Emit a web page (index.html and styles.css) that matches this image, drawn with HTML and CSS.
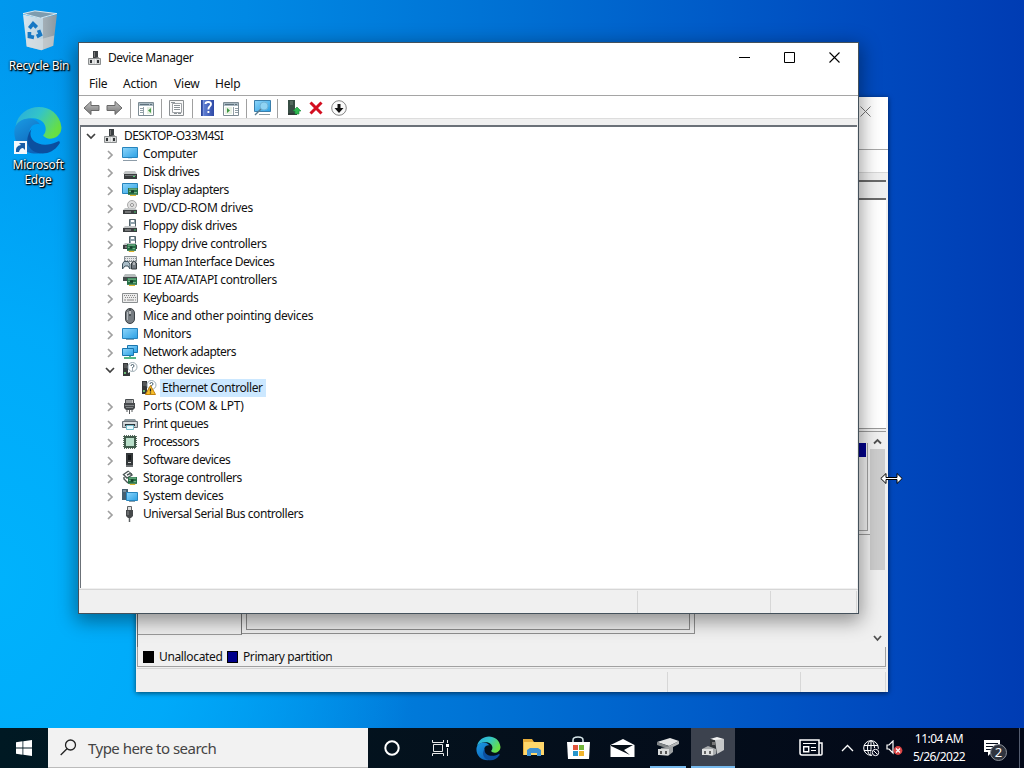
FILE: index.html
```html
<!DOCTYPE html>
<html lang="en">
<head>
<meta charset="utf-8">
<title>Device Manager</title>
<link rel="stylesheet" href="styles.css">
</head>
<body>
<svg class="defs" aria-hidden="true">
<defs>
<linearGradient id="scr" x1="0" y1="0" x2="1" y2="1"><stop offset="0" stop-color="#8ed6fb"/><stop offset="1" stop-color="#2ba0e4"/></linearGradient>
<linearGradient id="edgeTop" x1="0" y1="0" x2="1" y2=".5"><stop offset="0" stop-color="#28a9de"/><stop offset=".5" stop-color="#33c4c9"/><stop offset="1" stop-color="#68e044"/></linearGradient>
<linearGradient id="edgeLeft" x1="0" y1="0" x2=".6" y2="1"><stop offset="0" stop-color="#1a9be4"/><stop offset="1" stop-color="#0d62b8"/></linearGradient>
<linearGradient id="arrow" x1="0" y1="0" x2="0" y2="1"><stop offset="0" stop-color="#c4c4c4"/><stop offset="1" stop-color="#747474"/></linearGradient>
<linearGradient id="bin" x1="0" y1="0" x2="1" y2="0"><stop offset="0" stop-color="#d6e5ee"/><stop offset=".58" stop-color="#bdd3e0"/><stop offset=".6" stop-color="#a3afb7"/><stop offset="1" stop-color="#8b99a1"/></linearGradient>
<linearGradient id="help" x1="0" y1="0" x2="1" y2="0"><stop offset="0" stop-color="#263f94"/><stop offset=".25" stop-color="#5c7bd0"/><stop offset="1" stop-color="#2e49a5"/></linearGradient>
</defs>
<symbol id="i-root" viewBox="0 0 16 16"><path d="M7 1h5v7H7z" fill="#3b3f42"/><path d="M8 2h1v5H8z" fill="#777"/><path d="M9 8l4-1v2h-4z" fill="#999"/><path d="M2.500 8.500h12v6h-12z" fill="#d2d4d4" stroke="#8c8f90"/><path d="M4 10h2v3H4zM11 10h2v3h-2z" fill="#303335"/><path d="M7 9v5M9.500 9v5" stroke="#eee"/></symbol>
<symbol id="i-computer" viewBox="0 0 16 16"><path d="M.5 1.500h15v10H.5z" fill="url(#scr)" stroke="#2784bd"/><path d="M6 12h4v1H6z" fill="#cfe3ef"/><path d="M1 14.500h14" stroke="#8d9ca8"/></symbol>
<symbol id="i-disk" viewBox="0 0 16 16"><path d="M3 7h10l2 3H1z" fill="#c2c5c6"/><path d="M2 10h13v5H2z" fill="#393c3e"/><path d="M3 11.500h11" stroke="#727779"/><path d="M11 12h2v1h-2z" fill="#4fd572"/></symbol>
<symbol id="i-card" viewBox="0 0 10 7" preserveAspectRatio="none"><path d="M0 0h10v6H0z" fill="#267047"/><path d="M1 1h8M1 3h3M6 4h3" stroke="#75b58b"/><path d="M3 2h3v2H3z" fill="#153d2a"/><path d="M2 6h6v1H2z" fill="#ddb52d"/></symbol>
<symbol id="i-display" viewBox="0 0 16 16"><path d="M.5 1.500h15v10H.5z" fill="url(#scr)" stroke="#2784bd"/><use href="#i-card" x="6" y="6" width="10" height="8"/></symbol>
<symbol id="i-dvd" viewBox="0 0 16 16"><circle cx="10" cy="5" r="4.500" fill="#dfdfdf" stroke="#aaa"/><circle cx="10" cy="5" r="1.500" fill="#fff" stroke="#8f8f8f"/><path d="M3 8h10l2 2H1z" fill="#c2c5c6"/><path d="M1 10h14v4H1z" fill="#3b3e40"/><path d="M3 12h6" stroke="#aaa"/><path d="M12 12h2" stroke="#49c86b"/></symbol>
<symbol id="i-floppy" viewBox="0 0 16 16"><path d="M7.500 1.500h6v7h-6z" fill="#8fa2ab" stroke="#53636b"/><path d="M9 2h3v2H9zM9 6h4v2H9z" fill="#fff"/><path d="M3 8h10l2 2H1z" fill="#c2c5c6"/><path d="M1 10h14v4H1z" fill="#3b3e40"/><path d="M3 12h6" stroke="#aaa"/><path d="M12 12h2" stroke="#49c86b"/></symbol>
<symbol id="i-floppyc" viewBox="0 0 16 16"><use href="#i-floppy" y="-1" width="16" height="16"/><use href="#i-card" x="5" y="8" width="9" height="8"/></symbol>
<symbol id="i-hid" viewBox="0 0 16 16"><path d="M2.500 2.500h12v5h-12z" fill="#e6e7e8" stroke="#878e92"/><path d="M3 4.500h11M3 6.500h11" stroke="#929a9e" stroke-dasharray="1 1"/><path d="M.5 15v-5L2 7.500h4l2 2.500v5l-2-3H3z" fill="#a9bcc7" stroke="#40545f"/><path d="M9.500 15V9q2.500-3 5 0v6z" fill="#747c82" stroke="#343b3f"/><path d="M12 8v3" stroke="#eee"/></symbol>
<symbol id="i-ide" viewBox="0 0 16 16"><path d="M3 2h10l2 3H1z" fill="#b7bdbd"/><path d="M1 5h14v4H1z" fill="#454b4c"/><use href="#i-card" x="5" y="6" width="10" height="8"/></symbol>
<symbol id="i-keyboard" viewBox="0 0 16 16"><path d="M.5 3.500h15v9H.5z" fill="#ececec" stroke="#8b8f91"/><path d="M2 5.500h12M3 7.500h11" stroke="#888" stroke-dasharray="1 1"/><path d="M2 10h2m1 0h7m1 0h1" stroke="#888"/></symbol>
<symbol id="i-mouse" viewBox="0 0 16 16"><rect x="3.500" y=".5" width="9" height="15" rx="4.500" fill="#777d82" stroke="#3c4145"/><path d="M5.500 4v8" stroke="#b4b9bd"/><path d="M8 1v7" stroke="#252a2d"/><path d="M8 3v3" stroke="#ddd" stroke-width="1.500"/></symbol>
<symbol id="i-monitor" viewBox="0 0 16 16"><path d="M.5 2.500h15v10H.5z" fill="url(#scr)" stroke="#2582bc"/><path d="M4 13h8v1H4z" fill="#809fb1"/></symbol>
<symbol id="i-network" viewBox="0 0 16 16"><path d="M5.500 1.500h10v7h-10z" fill="url(#scr)" stroke="#1975ae"/><path d="M.5 4.500h11v7H.5z" fill="url(#scr)" stroke="#1975ae"/><path d="M2 14h12M8 12v3" stroke="#55b785" stroke-width="2"/></symbol>
<symbol id="i-other" viewBox="0 0 16 16"><path d="M1 1h5v13H1z" fill="#35383a"/><path d="M2 3h3M2 5h3" stroke="#777"/><path d="M2 10h2v2H2z" fill="#6ab973"/><path d="M6 11l2-1v4H6z" fill="#363d3c"/><circle cx="10.500" cy="5" r="4.500" fill="#fff" stroke="#9dacb4"/><path d="M9 4q0-1.500 1.500-1.500T12 4q0 1-1.500 1.500v1m0 1v1" fill="none" stroke="#445b69"/></symbol>
<symbol id="i-ethernet" viewBox="0 0 16 16"><use href="#i-other" width="16" height="16"/><path d="M9.500 5.500l5 9h-10z" fill="#f9bf28" stroke="#c28210"/><path d="M9.500 8.500v3m0 1v1" stroke="#222" stroke-width="1.300"/></symbol>
<symbol id="i-port" viewBox="0 0 16 16"><path d="M3.500 1.500h8v4h-8z" fill="#c9cacb" stroke="#4c5053"/><path d="M5 2v3m2-3v3m2-3v3" stroke="#6b6f72"/><path d="M2 5h11v5l-2 2H4l-2-2z" fill="#474a4d"/><path d="M3 7.500h9M4 9.500h7" stroke="#828688"/><path d="M7.500 12v4M5 11v3m5-3v3" stroke="#55585a"/></symbol>
<symbol id="i-print" viewBox="0 0 16 16"><path d="M3 3h10l2 3H1z" fill="#8d999e"/><path d="M.5 5.500h15v6H.5z" fill="#c3c9cc" stroke="#687178"/><path d="M2 7h12" stroke="#eef1f2"/><path d="M3 8h10v2H3z" fill="#28333a"/><path d="M4.500 9.500h7v4h-7z" fill="#eafaff" stroke="#74bdcc"/></symbol>
<symbol id="i-cpu" viewBox="0 0 16 16"><path d="M1 2.500h14M1 4.500h14M1 6.500h14M1 8.500h14M1 10.500h14M1 12.500h14M2.500 1v14M4.500 1v14M6.500 1v14M8.500 1v14M10.500 1v14M12.500 1v14" stroke="#596d60"/><path d="M2 2h12v12H2z" fill="#405b4b"/><path d="M4 4h8v8H4z" fill="#b9dfca"/></symbol>
<symbol id="i-soft" viewBox="0 0 16 16"><path d="M4 1h7v14H4z" fill="#34383a"/><path d="M6 3h3v5H6z" fill="#17191b"/><path d="M6 10h3v1H6z" fill="#ccc"/><path d="M4 13h7v2H4z" fill="#6a6e70"/></symbol>
<symbol id="i-storage" viewBox="0 0 16 16"><path d="M6.500 1L1.500 4.500 5 8l5-3-2-1.500-3 1.500M2 7v2l4 4" fill="none" stroke="#4b5656" stroke-width="1.400"/><path d="M6 1l4 3" stroke="#4b5656"/><use href="#i-card" x="6" y="7" width="9" height="8"/></symbol>
<symbol id="i-system" viewBox="0 0 16 16"><path d="M0 1h6v4H0zM0 5h4v7H0z" fill="#465f70"/><path d="M1 3h3" stroke="#a8bdca"/><path d="M4.500 4.500h11v8h-11z" fill="url(#scr)" stroke="#2784bd"/><path d="M7 13h6v1H7z" fill="#899fac"/></symbol>
<symbol id="i-usb" viewBox="0 0 16 16"><path d="M5.500.500h4v4h-4z" fill="#ddd" stroke="#606365"/><path d="M4 4h7v6l-2 2H6l-2-2z" fill="#46494b"/><path d="M6 5v4" stroke="#8b8f91"/><path d="M7.500 12v4" stroke="#5d6163" stroke-width="1.500"/></symbol>
<symbol id="i-edge" viewBox="0 0 48 48"><path d="M2 20C6-5 44-6 47 21c0 11-14 14-18 8 6-7 1-17-10-17C10 12 4 16 2 20z" fill="url(#edgeTop)"/><path d="M1 23c2-11 18-15 25-5-8-2-12 5-10 13 2 8 9 13 15 14C14 51-1 39 1 23z" fill="url(#edgeLeft)"/><path d="M18 22c-6 11 8 21 25 13 2-1 3 0 2 2C34 54 10 46 14 30q1-5 4-8z" fill="#0b4f9f"/></symbol>
</svg>

<main class="desktop">
  <div class="shortcut bin">
    <svg width="41" height="44" viewBox="0 0 44 48"><path d="M4 6l19 4 18-4-4 34-13 5-16-4z" fill="url(#bin)"/><path d="M4 5L17 2l24 3-18 5z" fill="#7d9caf" stroke="#e1edf3"/><path d="M7 30l16 3 15-4-1 11-13 5-16-4z" fill="#dadcdd" opacity=".55"/><g fill="none" stroke="#1778c4" stroke-width="4"><path d="M11 21l4-5 4 4M21 23l2 5-4 2M16 31l-5-1v-5"/></g></svg>
    <span>Recycle Bin</span>
  </div>
  <div class="shortcut edge">
    <svg width="50" height="50" viewBox="0 0 50 50"><use href="#i-edge" x="0" y="0" width="50" height="49"/><path d="M1 35h13v13H1z" fill="#f4f8fb"/><path d="M3 46q-1-6 5-7l-2-2h6v7l-2-2q-3 0-4 4z" fill="#185ca5"/></svg>
    <span>Microsoft<br>Edge</span>
  </div>

  <section class="window disk-window">
    <div class="disk-title"><svg width="11" height="11" viewBox="0 0 11 11"><path d="M.5.500l10 10m0-10l-10 10" stroke="#777"/></svg></div>
    <div class="disk-tools"></div>
    <div class="disk-gap"></div>
    <div class="disk-head"></div>
    <div class="disk-list"></div>
    <div class="disk-graph">
      <div class="tracks">
        <div class="track-one"><div class="volume"><div class="volume-bar"></div></div></div>
        <div class="track-two"><div class="disk-label"></div><div class="track-outer"><div class="track-inner"></div></div></div>
      </div>
      <div class="scroll">
        <svg width="15" height="17" viewBox="0 0 15 17"><path d="M4 11.500L7.500 8l3.500 3.500" fill="none" stroke="#505050" stroke-width="1.800"/></svg>
        <div class="thumb"></div>
        <svg width="15" height="17" viewBox="0 0 15 17"><path d="M4 6l3.500 4L11 6" fill="none" stroke="#505050" stroke-width="1.800"/></svg>
      </div>
    </div>
    <div class="legend"><i class="swatch black"></i><span class="leg1">Unallocated</span><i class="swatch navy"></i><span class="leg2">Primary partition</span></div>
    <div class="status disk-status"><i></i><i></i><i></i></div>
  </section>

  <section class="window device-window">
    <header class="titlebar">
      <svg class="icon" width="16" height="16"><use href="#i-root"/></svg><span>Device Manager</span>
      <div class="controls">
        <svg width="11" height="11" viewBox="0 0 11 11"><path d="M0 5.500h11" stroke="#000"/></svg>
        <svg width="11" height="11" viewBox="0 0 11 11"><path d="M.5.500h10v10H.5z" fill="none" stroke="#000"/></svg>
        <svg width="11" height="11" viewBox="0 0 11 11"><path d="M.5.500l10 10m0-10l-10 10" stroke="#000" stroke-width="1.100"/></svg>
      </div>
    </header>
    <nav class="menu"><span class="m1">File</span><span class="m2">Action</span><span class="m3">View</span><span class="m4">Help</span></nav>
    <div class="toolbar">
      <svg width="270" height="22" viewBox="0 0 270 22">
        <path d="M4 12l7-6.500v4h8v5h-8v4zM42 12l-7-6.500v4h-8v5h8v4z" fill="url(#arrow)" stroke="#686868"/>
        <path d="M50.500 3v19M81.500 3v19M112.500 3v19M166.500 3v19M197.500 3v19" stroke="#a0a0a0"/>
        <g id="panel"><path d="M58.500 6.500h15v13h-15z" fill="#fff" stroke="#7d8b93"/><path d="M59 8.500h14" stroke="#a9b9c2" stroke-width="3"/><path d="M60 8.500h9m1 0h2" stroke="#5f717c"/></g>
        <path d="M63.500 11v8M60 12.500h3m-3 2h3m-3 2h3" stroke="#93a0a8"/><path d="M67 11h5v7h-5z" fill="#e8f1e4"/><path d="M71 12v5l-3-2.500z" fill="#4c9f4c"/>
        <path d="M89.500 4.500h14v15h-14z" fill="#f8f8f8" stroke="#8b8f91"/><path d="M92.500 7.500h9v9h-9z" fill="#fff" stroke="#9fa3a6"/><path d="M91 6.500h4M94 9.500h6m-6 2h6m-6 2h6M94 17.500h3m1 0h3" stroke="#8b9297"/>
        <path d="M121 4h13v16h-13z" fill="url(#help)"/><path d="M123.500 4v16" stroke="#7692dc"/><path d="M125.500 8q0-2 2.700-2t2.800 2q0 1.500-1.400 2.500-1.200 1-1.200 3m0 1.500v2" fill="none" stroke="#fff" stroke-width="1.900"/>
        <use href="#panel" x="85"/><path d="M153.500 11v8M155 12.500h3m-3 2h3m-3 2h3" stroke="#93a0a8"/><path d="M145 11h7v7h-7z" fill="#e8f1e4"/><path d="M147 12v5l3-2.500z" fill="#3c963f"/>
        <path d="M174.500 4.500h16v11h-16z" fill="url(#scr)" stroke="#3a7fac"/><circle cx="184" cy="10" r="4" fill="#8fd3f3" stroke="#70b4d8"/><path d="M181 13l-6 6" stroke="#5b7c8e" stroke-width="1.500"/><path d="M179 18.500h11" stroke="#8b9ba4"/>
        <path d="M208 4h7v13h-7z" fill="#374e44"/><path d="M210 6h3m-3 2h3" stroke="#708478"/><path d="M208 17h9v2h-9z" fill="#303c38"/><path d="M213 15l4-4 4 4h-2v3h-4v-3z" fill="#2eb850" stroke="#188e39" stroke-width=".6"/>
        <path d="M230.500 6.500l11 11m0-11l-11 11" stroke="#d30e20" stroke-width="3"/>
        <circle cx="259" cy="12" r="7.300" fill="#fafafa" stroke="#858585"/><path d="M257.500 8h3v4h3l-4.500 5-4.500-5h3z" fill="#111"/>
      </svg>
    </div>
    <div class="tool-gap"></div>
    <div class="tree">
      <div class="row root"><svg class="chev open" viewBox="0 0 10 10"><path d="M1 3l4 4 4-4"/></svg><svg class="icon"><use href="#i-root"/></svg><span>DESKTOP-O33M4SI</span></div>
      <div class="row"><svg class="chev" viewBox="0 0 10 10"><path d="M3 1l4 4-4 4"/></svg><svg class="icon"><use href="#i-computer"/></svg><span>Computer</span></div>
      <div class="row"><svg class="chev" viewBox="0 0 10 10"><path d="M3 1l4 4-4 4"/></svg><svg class="icon"><use href="#i-disk"/></svg><span class="snug">Disk drives</span></div>
      <div class="row"><svg class="chev" viewBox="0 0 10 10"><path d="M3 1l4 4-4 4"/></svg><svg class="icon"><use href="#i-display"/></svg><span class="tight">Display adapters</span></div>
      <div class="row"><svg class="chev" viewBox="0 0 10 10"><path d="M3 1l4 4-4 4"/></svg><svg class="icon"><use href="#i-dvd"/></svg><span class="loose">DVD/CD-ROM drives</span></div>
      <div class="row"><svg class="chev" viewBox="0 0 10 10"><path d="M3 1l4 4-4 4"/></svg><svg class="icon"><use href="#i-floppy"/></svg><span>Floppy disk drives</span></div>
      <div class="row"><svg class="chev" viewBox="0 0 10 10"><path d="M3 1l4 4-4 4"/></svg><svg class="icon"><use href="#i-floppyc"/></svg><span>Floppy drive controllers</span></div>
      <div class="row"><svg class="chev" viewBox="0 0 10 10"><path d="M3 1l4 4-4 4"/></svg><svg class="icon"><use href="#i-hid"/></svg><span class="snug">Human Interface Devices</span></div>
      <div class="row"><svg class="chev" viewBox="0 0 10 10"><path d="M3 1l4 4-4 4"/></svg><svg class="icon"><use href="#i-ide"/></svg><span>IDE ATA/ATAPI controllers</span></div>
      <div class="row"><svg class="chev" viewBox="0 0 10 10"><path d="M3 1l4 4-4 4"/></svg><svg class="icon"><use href="#i-keyboard"/></svg><span class="snug">Keyboards</span></div>
      <div class="row"><svg class="chev" viewBox="0 0 10 10"><path d="M3 1l4 4-4 4"/></svg><svg class="icon"><use href="#i-mouse"/></svg><span class="mice">Mice and other pointing devices</span></div>
      <div class="row"><svg class="chev" viewBox="0 0 10 10"><path d="M3 1l4 4-4 4"/></svg><svg class="icon"><use href="#i-monitor"/></svg><span>Monitors</span></div>
      <div class="row"><svg class="chev" viewBox="0 0 10 10"><path d="M3 1l4 4-4 4"/></svg><svg class="icon"><use href="#i-network"/></svg><span class="tight">Network adapters</span></div>
      <div class="row"><svg class="chev open" viewBox="0 0 10 10"><path d="M1 3l4 4 4-4"/></svg><svg class="icon"><use href="#i-other"/></svg><span class="snug">Other devices</span></div>
      <div class="row child"><svg class="icon"><use href="#i-ethernet"/></svg><span class="selected">Ethernet Controller</span></div>
      <div class="row"><svg class="chev" viewBox="0 0 10 10"><path d="M3 1l4 4-4 4"/></svg><svg class="icon"><use href="#i-port"/></svg><span class="ports">Ports (COM &amp; LPT)</span></div>
      <div class="row"><svg class="chev" viewBox="0 0 10 10"><path d="M3 1l4 4-4 4"/></svg><svg class="icon"><use href="#i-print"/></svg><span class="tight">Print queues</span></div>
      <div class="row"><svg class="chev" viewBox="0 0 10 10"><path d="M3 1l4 4-4 4"/></svg><svg class="icon"><use href="#i-cpu"/></svg><span class="tight">Processors</span></div>
      <div class="row"><svg class="chev" viewBox="0 0 10 10"><path d="M3 1l4 4-4 4"/></svg><svg class="icon"><use href="#i-soft"/></svg><span class="snug">Software devices</span></div>
      <div class="row"><svg class="chev" viewBox="0 0 10 10"><path d="M3 1l4 4-4 4"/></svg><svg class="icon"><use href="#i-storage"/></svg><span class="snug">Storage controllers</span></div>
      <div class="row"><svg class="chev" viewBox="0 0 10 10"><path d="M3 1l4 4-4 4"/></svg><svg class="icon"><use href="#i-system"/></svg><span>System devices</span></div>
      <div class="row"><svg class="chev" viewBox="0 0 10 10"><path d="M3 1l4 4-4 4"/></svg><svg class="icon"><use href="#i-usb"/></svg><span class="snug">Universal Serial Bus controllers</span></div>
    </div>
    <div class="status device-status"><i></i><i></i><i></i></div>
  </section>

  <svg class="cursor" width="23" height="13" viewBox="0 0 23 13"><path d="M.8 6.500L6 1.500v4h11v-4l5.200 5-5.200 5v-4H6v4z" fill="#fff" stroke="#000"/></svg>
</main>

<footer class="taskbar">
  <div class="start"><svg width="16" height="16" viewBox="0 0 16 16"><path d="M0 2.200l6.500-.9v6.300H0zM7.300 1.200L16 0v7.600H7.300zM0 8.400h6.500v6.300L0 13.800zM7.300 8.400H16V16l-8.700-1.200z" fill="#fff"/></svg></div>
  <div class="search"><svg width="17" height="17" viewBox="0 0 17 17"><circle cx="10.500" cy="6" r="5" fill="none" stroke="#222" stroke-width="1.300"/><path d="M7 9.700L.7 16" stroke="#222" stroke-width="1.300"/></svg><span>Type here to search</span></div>
  <div class="app cortana"><svg width="16" height="16" viewBox="0 0 16 16"><circle cx="8" cy="8" r="6.700" fill="none" stroke="#fff" stroke-width="2"/></svg></div>
  <div class="app"><svg width="17" height="16" viewBox="0 0 17 16"><path d="M.5 0v2.500h11V0M.5 16v-2.500h11V16M1.500 4.500h9v7h-9zM15.500 0v3m0 5v8" fill="none" stroke="#e8e8e8"/><path d="M14 4h3v3h-3z" fill="#fff"/></svg></div>
  <div class="app edge-app"><svg width="25" height="25"><use href="#i-edge"/></svg></div>
  <div class="app"><svg width="23" height="20" viewBox="0 0 23 20"><path d="M1 1h9l2 3h10v13H1z" fill="#e7ad3b"/><path d="M2 4h20v13H2z" fill="#ffd76b"/><path d="M5 18v-6l3-2h8l3 2v6h-4v-3H9v3z" fill="#3e91d3"/></svg></div>
  <div class="app"><svg width="24" height="24" viewBox="0 0 24 24"><path d="M7 6V4q0-3 5-3t5 3v2" fill="none" stroke="#d6e5e8" stroke-width="1.500"/><path d="M1 6h23l-1 17H2z" fill="#fff"/><path d="M7 9h5v5H7z" fill="#e3563d"/><path d="M13 9h5v5h-5z" fill="#74b63b"/><path d="M7 15h5v5H7z" fill="#2796cc"/><path d="M13 15h5v5h-5z" fill="#f0b42c"/></svg></div>
  <div class="app"><svg width="25" height="20" viewBox="0 0 25 20"><path d="M.5 7L13 1l11.500 6v12H.5z" fill="#fff"/><path d="M1 7h22l-9 5 6 5L1 8z" fill="#071019"/></svg></div>
  <div class="app running"><svg width="25" height="22" viewBox="0 0 25 22"><path d="M1 6l13-4 9 3-10 5z" fill="#e4e5e5"/><path d="M1 6l12 4v3L1 9z" fill="#818587"/><path d="M13 10l10-5v3l-10 5z" fill="#b4b6b7"/><path d="M5 12l12-2v6l-5 4-9-1z" fill="#9da0a2"/><path d="M2 13h11v6H2z" fill="#d8dada"/><path d="M4 15h2v3H4zM9 15h2v3H9z" fill="#555"/></svg></div>
  <div class="app running active"><svg width="25" height="22" viewBox="0 0 25 22"><path d="M9 3l7-2 7 2-4 3z" fill="#f2f2f2"/><path d="M9 3l8 2v12l-8-5z" fill="#303437"/><path d="M11 6h3v3h-3z" fill="#777"/><path d="M14 4l9-1v11l-7 4z" fill="#c5c7c8"/><path d="M1 13l6-3 8 3v5l-4 2-10-2z" fill="#a8abad"/><path d="M1 13h11v6H1z" fill="#dedfdf"/><path d="M3 15h2v3H3zM8 15h2v3H8z" fill="#666"/></svg></div>
  <div class="tray">
    <svg class="news" width="25" height="18" viewBox="0 0 25 18"><path d="M1 1h19v15H3q-2 0-2-2zM20 4h3v11q0 1-1 1h-3" fill="none" stroke="#fff" stroke-width="1.500"/><path d="M4 4.500h13M12 8.500h5m-5 3h5" stroke="#fff"/><path d="M4.700 7.700h5v5h-5z" fill="none" stroke="#fff" stroke-width="1.400"/></svg>
    <svg class="up" width="13" height="8" viewBox="0 0 13 8"><path d="M1 7l5.500-5.500L12 7" fill="none" stroke="#fff" stroke-width="1.300"/></svg>
    <svg class="globe" width="17" height="17" viewBox="0 0 17 17"><g fill="none" stroke="#fff"><circle cx="8" cy="8" r="7.300"/><ellipse cx="8" cy="8" rx="3.500" ry="7.300"/><path d="M1 5.500h14M1 10.500h14M8 1v14"/></g><circle cx="12.500" cy="12.500" r="4.500" fill="#05091d"/><circle cx="12.500" cy="12.500" r="3.200" fill="#05091d" stroke="#fff"/><path d="M10.500 10.500l4 4" stroke="#fff"/></svg>
    <svg class="sound" width="17" height="16" viewBox="0 0 17 16"><path d="M1 5h2l4-4v12L3 9H1z" fill="none" stroke="#fff" stroke-width="1.200"/><circle cx="12" cy="10.500" r="4.400" fill="#d94343"/><path d="M10 8.500l4 4m0-4l-4 4" stroke="#fff" stroke-width="1.200"/></svg>
    <div class="clock"><span class="time">11:04 AM</span><span class="date">5/26/2022</span></div>
    <div class="notice"><svg width="18" height="18" viewBox="0 0 18 18"><path d="M1 1h16v12H9l-4 4v-4H1z" fill="#fff"/><path d="M3 4.500h12m-12 3h12m-12 3h8" stroke="#071020"/></svg><b>2</b></div>
  </div>
</footer>
</body>
</html>
```
FILE: styles.css
```css
* { box-sizing: border-box; }
html, body { width: 1024px; height: 768px; margin: 0; overflow: hidden; }
body { display: flex; flex-direction: column; font: 12px/18px "Noto Sans", sans-serif; letter-spacing: -.35px; color: #111; }
svg { display: block; flex: none; }
i, b { font-style: normal; }
.defs { position: absolute; width: 0; height: 0; }
.desktop { position: relative; height: 728px; background: radial-gradient(ellipse 420px 560px at 0 580px, #00b2fc 0%, rgba(0, 174, 252, .85) 45%, rgba(0, 160, 245, 0) 100%), linear-gradient(90deg, #0098ee 0%, #0089e4 24%, #0070d3 50%, #0057c6 73%, #0048bd 87%, #003cb3 100%); }

.shortcut { position: absolute; left: 0; width: 76px; display: flex; flex-direction: column; align-items: center; text-align: center; color: #fff; line-height: 15px; letter-spacing: -.25px; text-shadow: 1px 1px 2px #000, 0 0 2px #000, 1px 1px 1px #000; }
.bin { top: 9px; left: 1px; }
.bin span { margin-top: 5px; }
.edge { top: 106px; }
.edge span { margin-top: 1px; }

.window { position: absolute; display: flex; flex-direction: column; background: #f0f0f0; }
.window > * { flex-shrink: 0; }
.disk-window { left: 136px; top: 97px; width: 752px; height: 595px; padding: 0 2px 0 1px; box-shadow: 0 1px 5px rgba(0, 0, 0, .6); }
.disk-title { height: 53px; margin: 0 -2px 0 -1px; padding: 9px 17px; background: #fff; border-bottom: 1px solid #a8a8a8; display: flex; justify-content: flex-end; }
.disk-tools { height: 23px; margin: 0 -2px 0 -1px; background: #fff; border-bottom: 1px solid #d8d8d8; }
.disk-gap { height: 7px; }
.disk-head { height: 20px; background: #f0f0f0; border: solid #696969; border-width: 2px 0 2px; }
.disk-list { height: 228px; background: #fff; }
.disk-graph { height: 219px; display: flex; border-left: 1px solid #696969; border-top: 4px double #999; }
.tracks { width: 732px; display: flex; flex-direction: column; }
.track-one { height: 103px; border-bottom: 1px solid #999; padding: 11px 2px 3px 106px; display: flex; }
.volume { width: 100%; border: solid #a0a0a0; border-width: 0 1px 1px 1px; padding-right: 1px; }
.volume-bar { height: 14px; background: #00008b; }
.track-two { height: 100px; display: flex; }
.disk-label { width: 104px; height: 100px; border-right: 1px solid #777; border-bottom: 1px solid #999; background: #eee; }
.track-outer { width: 453px; height: 99px; padding: 2px 4px 3px; border: solid #909090; border-width: 0 1px 1px 0; }
.track-inner { height: 93px; border: 1px solid #8c8c8c; background: #ebebeb; }
.scroll { width: 15px; background: #f0f0f0; display: flex; flex-direction: column; }
.thumb { height: 121px; background: #cdcdcd; margin-bottom: 60px; }
.legend { height: 20px; border: solid #a0a0a0; border-width: 0 1px 1px; padding-left: 5px; display: flex; align-items: center; }
.swatch { width: 11px; height: 12px; border: 1px solid #000; }
.black { background: #000; }
.navy { background: #00008b; }
.leg1 { width: 68px; margin-left: 5px; letter-spacing: -.35px; }
.leg2 { margin-left: 5px; letter-spacing: -.4px; }
.status { display: flex; border-top: 1px solid #d6d6d6; }
.status i { border-right: 1px solid #d7d7d7; }
.disk-status { height: 24px; margin-top: 1px; padding-top: 3px; }
.disk-status i:nth-child(1) { width: 531px; }
.disk-status i:nth-child(2) { width: 133px; }
.disk-status i:nth-child(3) { width: 85px; }

.device-window { left: 78px; top: 42px; width: 781px; height: 572px; border: 1px solid #44515b; box-shadow: 0 5px 18px 2px rgba(0, 0, 0, .4); }
.titlebar { height: 30px; padding: 0 18px 0 7px; background: #fff; display: flex; align-items: center; }
.titlebar span { margin-left: 6px; letter-spacing: -.4px; }
.controls { display: flex; gap: 34px; margin-left: auto; margin-bottom: 2px; }
.menu { height: 23px; padding-left: 10px; background: #fff; display: flex; align-items: center; border-bottom: 1px solid #a5a5a5; letter-spacing: -.2px; }
.m1 { width: 34px; } .m2 { width: 51px; } .m3 { width: 41px; }
.toolbar { height: 23px; background: #fff; border-bottom: 1px solid #ddd; }
.toolbar svg { margin-left: 1px; }
.tool-gap { height: 6px; background: #f0f0f0; }
.tree { height: 463px; margin: 0 1px; border: solid #6b7178; border-width: 2px 0 0 1px; background: #fff; }
.row { height: 18px; display: flex; align-items: center; padding-left: 24px; }
.root { padding-left: 5px; }
.child { padding-left: 60px; }
.chev { width: 10px; height: 10px; margin-right: 7px; margin-top: 2px; fill: none; stroke: #a0a0a0; stroke-width: 1.700; }
.root .chev { margin-right: 6px; }
.chev.open { stroke: #404040; margin-top: 0; }
.icon { width: 16px; height: 16px; flex: none; }
.row span { margin-left: 5px; white-space: nowrap; }
.row .selected { height: 18px; margin-left: 3px; padding: 0 3px 0 2px; background: #cce8ff; letter-spacing: -.4px; }
.root span { margin-left: 6px; letter-spacing: -.57px; }
.snug { letter-spacing: -.45px; }
.tight { letter-spacing: -.53px; }
.loose { letter-spacing: -.24px; }
.ports { letter-spacing: -.11px; }
.mice { letter-spacing: -.32px; }
.device-status { height: 24px; margin-top: 1px; padding-top: 1px; }
.device-status i:nth-child(1) { width: 559px; }
.device-status i:nth-child(2) { width: 133px; }
.device-status i:nth-child(3) { width: 86px; }
.cursor { position: absolute; left: 880px; top: 472px; }

.taskbar { height: 40px; display: flex; background: linear-gradient(90deg, #001923, #04101c 48%, #030818); color: #fff; }
.start { width: 48px; display: grid; place-items: center; }
.search { width: 320px; background: #f2f2f2; color: #444; display: flex; align-items: center; padding-left: 12px; border-bottom: 1px solid #bbb; font-size: 15px; letter-spacing: -.52px; }
.search span { margin-left: 11px; }
.app { width: 45px; display: grid; place-items: center; }
.cortana { width: 48px; }
.cortana + .app { width: 48px; }
.edge-app { width: 48px; }
.edge-app + .app { width: 43px; }
.running { width: 36px; margin-left: 5px; border-bottom: 2px solid #76b9ed; }
.active { width: 44px; background: #3c424e; }
.tray { margin-left: auto; width: 221px; display: flex; align-items: center; border-right: 1px solid #555d70; margin-right: 4px; }
.up { margin-left: 17px; }
.globe { margin-left: 9px; }
.sound { margin-left: 6px; }
.clock { width: 62px; margin-left: 5px; display: flex; flex-direction: column; align-items: center; line-height: 18px; letter-spacing: -.5px; }
.date { letter-spacing: -.55px; }
.notice { position: relative; margin-left: 13px; }
.notice b { position: absolute; left: 7px; top: 5px; width: 17px; height: 17px; border: 1px solid #8c9199; border-radius: 50%; background: #30343e; font: 13px/15px "Noto Sans", sans-serif; text-align: center; letter-spacing: 0; }
```
